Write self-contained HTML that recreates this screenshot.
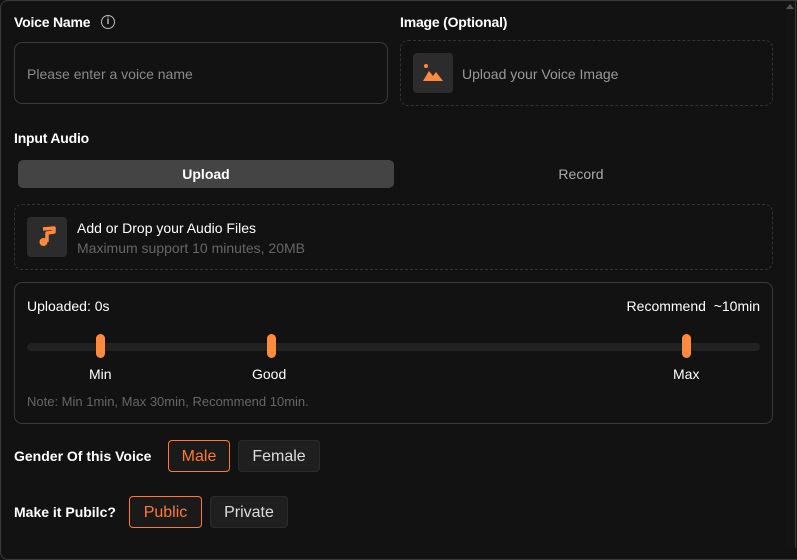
<!DOCTYPE html>
<html><head><meta charset="utf-8"><style>
*{box-sizing:border-box;margin:0;padding:0}
body{width:797px;height:548px;background:#121212;font-family:"Liberation Sans",sans-serif;color:#fff;position:relative;overflow:hidden}
.a{position:absolute}
.frame{left:0;top:0;width:820px;height:560px;border:1px solid #3a3a3a;border-radius:8px}
.lbl{font-size:14px;font-weight:bold;letter-spacing:-0.2px}
.box{border:1px solid #3a3a3a;border-radius:8px}
.dash{border:1px dashed #333;border-radius:8px}
.ic{width:40px;height:40px;background:#2c2c2c;border-radius:4px}
.gray{color:#8a8a8a}
.th{width:9px;height:24px;background:#ff8a3d;border-radius:5px;top:334px}
.btn{height:32px;border-radius:4px;font-size:16px;text-align:center;line-height:30px;top:0}
.on{border:1px solid #ff7a2f;color:#ff7a2f;background:#1a1a1a}
.off{border:1px solid #2a2a2a;background:#1f1f1f;color:#ddd}
</style></head><body>
<div class="a frame"></div>
<div class="a" style="left:786px;top:1px;width:11px;height:547px;background:#141414"></div>
<div class="a" style="left:795px;top:1px;width:1px;height:547px;background:#3a3a3a"></div>
<div class="a" style="left:786px;top:0;width:11px;height:1px;background:#3a3a3a"></div>
<div class="a" style="left:786px;top:4px;width:0;height:0;border-left:4px solid transparent;border-right:4px solid transparent;border-bottom:5px solid #555"></div>

<div class="a lbl" style="left:14px;top:14px">Voice Name</div>
<div class="a" style="left:101px;top:15px;width:14px;height:14px;border:1.3px solid #bbb;border-radius:50%;font-size:10px;color:#bbb;text-align:center;line-height:12px;font-weight:bold">i</div>
<div class="a box" style="left:14px;top:42px;width:374px;height:62px"></div>
<div class="a gray" style="left:27px;top:66px;font-size:14px">Please enter a voice name</div>

<div class="a lbl" style="left:400px;top:14px">Image (Optional)</div>
<div class="a dash" style="left:400px;top:40px;width:373px;height:66px"></div>
<div class="a ic" style="left:413px;top:53px"></div>
<svg class="a" style="left:422px;top:63px" width="22" height="20"><circle cx="4" cy="3" r="2" fill="#ff8a3d"/><path d="M1 18 L7 8 L11 13 L14 9 L21 18 Z" fill="#ff8a3d"/></svg>
<div class="a gray" style="left:462px;top:66px;font-size:14px;color:#999">Upload your Voice Image</div>

<div class="a lbl" style="left:14px;top:130px">Input Audio</div>
<div class="a" style="left:18px;top:160px;width:376px;height:28px;background:#444;border-radius:5px;text-align:center;line-height:28px;font-size:14px;font-weight:bold">Upload</div>
<div class="a" style="left:400px;top:160px;width:362px;height:28px;text-align:center;line-height:28px;font-size:14px;color:#aaa">Record</div>

<div class="a dash" style="left:14px;top:204px;width:759px;height:66px"></div>
<div class="a ic" style="left:27px;top:217px"></div>
<svg class="a" style="left:36px;top:226px" width="22" height="22"><path d="M7 3 L18 2 L18 6 L11 7 L11 16" stroke="#ff8a3d" stroke-width="3.5" fill="none" stroke-linejoin="round"/><circle cx="7.5" cy="16" r="4" fill="#ff8a3d"/></svg>
<div class="a" style="left:77px;top:220px;font-size:14px">Add or Drop your Audio Files</div>
<div class="a" style="left:77px;top:240px;font-size:14px;color:#666">Maximum support 10 minutes, 20MB</div>

<div class="a box" style="left:14px;top:282px;width:759px;height:142px"></div>
<div class="a" style="left:27px;top:298px;font-size:14px">Uploaded: 0s</div>
<div class="a" style="right:37px;top:298px;font-size:14px">Recommend &nbsp;~10min</div>
<div class="a" style="left:27px;top:343px;width:733px;height:8px;background:#222;border-radius:4px"></div>
<div class="a th" style="left:96px"></div>
<div class="a th" style="left:267px"></div>
<div class="a th" style="left:682px"></div>
<div class="a" style="left:89px;top:366px;font-size:14px">Min</div>
<div class="a" style="left:252px;top:366px;font-size:14px">Good</div>
<div class="a" style="left:673px;top:366px;font-size:14px">Max</div>
<div class="a" style="left:27px;top:394px;font-size:13px;color:#666">Note: Min 1min, Max 30min, Recommend 10min.</div>

<div class="a" style="left:14px;top:448px;font-size:14px;font-weight:bold">Gender Of this Voice</div>
<div class="a btn on" style="left:168px;top:440px;width:62px;line-height:31px">Male</div>
<div class="a btn off" style="left:238px;top:440px;width:82px;line-height:31px">Female</div>

<div class="a" style="left:14px;top:504px;font-size:14px;font-weight:bold">Make it Pubilc?</div>
<div class="a btn on" style="left:129px;top:496px;width:73px;line-height:31px">Public</div>
<div class="a btn off" style="left:210px;top:496px;width:78px;line-height:31px">Private</div>
</body></html>
